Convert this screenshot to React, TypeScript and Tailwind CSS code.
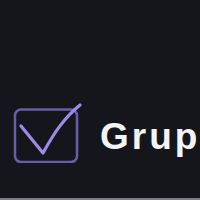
import React from 'react';

const CheckIcon: React.FC = () => (
  <svg width="70" height="60" viewBox="0 0 70 60" fill="none" className="shrink-0">
    <rect x="3" y="6.5" width="62" height="52.5" rx="6" stroke="#6a5ca8" strokeWidth="2.5" />
    <path
      d="M9 23 L31 50 C 42 30, 52 15, 68 2"
      stroke="#9d8ae6"
      strokeWidth="3.2"
      strokeLinecap="round"
      strokeLinejoin="round"
    />
  </svg>
);

const App: React.FC = () => {
  return (
    <div className="w-[200px] h-[200px] overflow-hidden bg-[#15161c] border-b-2 border-[#7d7e85] flex flex-col">
      <div className="flex items-start pt-[103px] pl-[12px] gap-[18px]">
        <CheckIcon />
        <span
          className="mt-[15px] text-[37px] leading-none font-bold tracking-[3px] text-[#f4f4f6] whitespace-nowrap"
          style={{ fontFamily: '"Liberation Sans", Arial, sans-serif' }}
        >
          Grupos
        </span>
      </div>
    </div>
  );
};

export default App;
